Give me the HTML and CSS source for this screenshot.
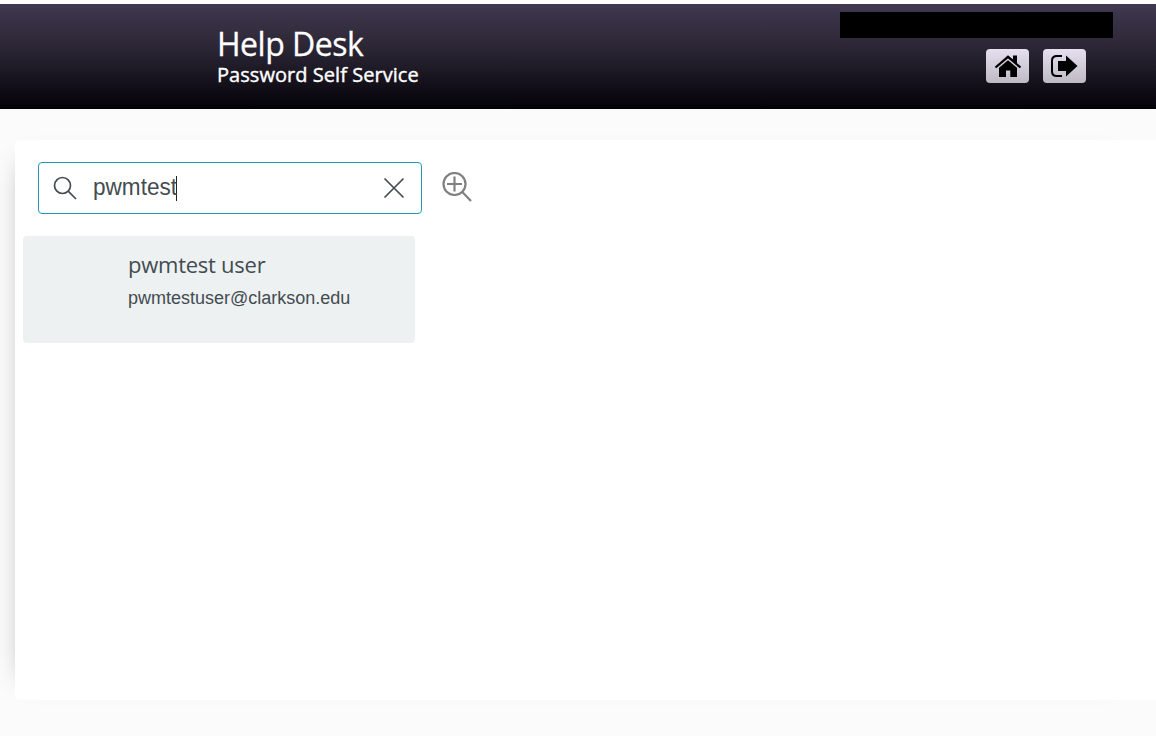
FILE: index.html
```html
<!DOCTYPE html>
<html lang="en">
<head>
  <meta charset="UTF-8">
  <meta name="viewport" content="width=device-width, initial-scale=1.0">
  <title>Help Desk - Password Self Service</title>
  <link rel="stylesheet" href="styles.css">
</head>
<body>
  <header class="header">
    <div class="header-titles">
      <h1 class="header-page">Help Desk</h1>
      <div class="header-title">Password Self Service</div>
    </div>
    <div class="header-right">
      <div class="header-user"></div>
      <div class="header-buttons">
        <a class="header-button" title="Home">
          <svg width="28" height="24" viewBox="0 0 28 24">
            <path d="M1.500 13.500 L14 2.800 L26.500 13.500" fill="none" stroke="#000" stroke-width="2.300"/>
            <path d="M19 1.500 H23 V10 L19 6.500 Z"/>
            <path d="M5 13.800 L14 6.200 L23 13.800 V23 H16.300 V16.500 H12 V23 H5 Z"/>
          </svg>
        </a>
        <a class="header-button" title="Logout">
          <svg width="28" height="24" viewBox="0 0 28 24">
            <path d="M11 2 H6 Q1 2 1 6.500 V17.500 Q1 22 6 22 H11" fill="none" stroke="#000" stroke-width="2"/>
            <path d="M7 7 H15 V1.500 L26.500 12 L15 22.500 V17 H7 Z"/>
          </svg>
        </a>
      </div>
    </div>
  </header>

  <main class="content">
    <div class="search-bar">
      <div class="search-box">
        <svg class="search-icon" width="24" height="24" viewBox="0 0 24 24">
          <circle cx="9.500" cy="9.500" r="8"/>
          <path d="M15.200 15.200 L23 23"/>
        </svg>
        <span class="search-text">pwmtest</span><span class="caret"></span>
        <svg class="clear-icon" width="22" height="22" viewBox="0 0 22 22">
          <path d="M1.500 1.500 L20.500 20.500 M20.500 1.500 L1.500 20.500"/>
        </svg>
      </div>
      <svg class="advanced-icon" width="30" height="31" viewBox="0 0 30 31">
        <circle cx="12.500" cy="12" r="11"/>
        <path d="M20.300 20 L29 29 M12.500 4.500 V19.500 M5 12 H20"/>
      </svg>
    </div>

    <div class="person-card">
      <div class="person-name">pwmtest user</div>
      <div class="person-email">pwmtestuser@clarkson.edu</div>
    </div>
  </main>
</body>
</html>
```
FILE: styles.css
```css
body {
  margin: 0;
  padding-top: 4px;
  height: 732px;
  overflow: hidden;
  background: linear-gradient(#fff 4px, #fbfbfb 4px);
  font-family: "Liberation Sans", Arial, sans-serif;
  color: #434c50;
}
.header {
  display: flex;
  justify-content: space-between;
  height: 105px;
  background: linear-gradient(#413950, #292432 45%, #06040c 96%, #000);
  color: #fff;
  font-family: "Trebuchet MS", "Open Sans", sans-serif;
}
.header-titles {
  padding: 20px 0 0 217px;
}
.header-page {
  margin: 0;
  font-size: 32px;
  font-weight: 400;
  line-height: 39px;
  letter-spacing: -0.5px;
  -webkit-text-stroke: 0.3px #fff;
}
.header-title {
  margin-top: 1px;
  font-size: 20px;
  line-height: 22px;
  letter-spacing: 0.05px;
  -webkit-text-stroke: 0.4px #fff;
}
.header-right {
  padding: 8px 43px 0 0;
}
.header-user {
  width: 273px;
  height: 26px;
  background: #000;
}
.header-buttons {
  display: flex;
  justify-content: flex-end;
  gap: 14px;
  margin: 11px 27px 0 0;
}
.header-button {
  display: flex;
  align-items: center;
  justify-content: center;
  width: 43px;
  height: 34px;
  border-radius: 4px;
  background: linear-gradient(#e5dff0, #bebac3);
}
.content {
  height: 560px;
  margin: 31px 0 0 15px;
  border-radius: 5px 0 0 5px;
  background: #fff;
  box-shadow: -16px 0 26px -26px rgba(0, 0, 0, 0.4);
}
.search-bar {
  display: flex;
  padding: 22px 0 0 23px;
}
.search-box {
  box-sizing: border-box;
  display: flex;
  align-items: center;
  width: 384px;
  height: 52px;
  padding: 0 16px 0 14px;
  border: 1px solid #2397b8;
  border-radius: 4px;
}
.search-icon,
.clear-icon,
.advanced-icon {
  fill: none;
  stroke: #434c50;
  stroke-width: 1.7;
}
.search-text {
  width: 83px;
  margin: -2px 0 0 16px;
  font-size: 24px;
  transform: scaleX(0.94);
  transform-origin: left;
}
.caret {
  width: 1px;
  height: 25px;
  background: #222;
}
.clear-icon {
  margin-left: auto;
}
.advanced-icon {
  margin: 10px 0 0 20px;
  stroke: #808080;
  stroke-width: 2.2;
}
.person-card {
  box-sizing: border-box;
  width: 392px;
  height: 107px;
  margin: 22px 0 0 8px;
  padding: 13px 0 0 105px;
  border-radius: 4px;
  background: #edf1f2;
}
.person-name {
  font-family: "Trebuchet MS", "Open Sans", sans-serif;
  font-size: 22px;
  line-height: 30px;
  letter-spacing: -0.25px;
}
.person-email {
  margin-top: 8px;
  font-size: 18px;
  line-height: 22px;
}
```
